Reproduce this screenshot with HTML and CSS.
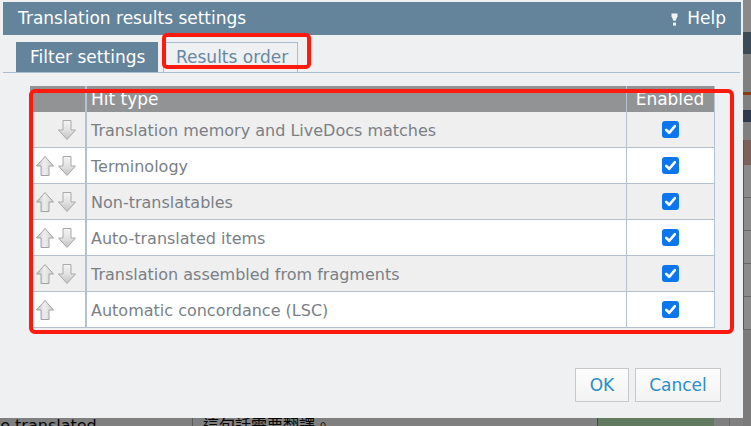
FILE: index.html
```html
<!DOCTYPE html>
<html lang="en">
<head>
<meta charset="utf-8">
<title>Translation results settings</title>
<link rel="stylesheet" href="styles.css">
</head>
<body>
<div class="defs">
  <svg width="0" height="0" aria-hidden="true">
    <defs>
      <linearGradient id="gDown" x1="0" y1="0" x2="0" y2="1">
        <stop offset="0" stop-color="#f4f4f4"/>
        <stop offset="0.5" stop-color="#e2e2e2"/>
        <stop offset="1" stop-color="#c2c2c2"/>
      </linearGradient>
      <linearGradient id="gUp" x1="0" y1="0" x2="1" y2="0">
        <stop offset="0" stop-color="#bdbdbd"/>
        <stop offset="0.45" stop-color="#ededed"/>
        <stop offset="1" stop-color="#d0d0d0"/>
      </linearGradient>
      <symbol id="arrowDown" viewBox="0 0 18 20">
        <path d="M5 0.5 H13 V10 H17.5 L9 19.5 L0.5 10 H5 Z" fill="url(#gDown)" stroke="#a9a9a9" stroke-width="1" stroke-linejoin="round"/>
      </symbol>
      <symbol id="arrowUp" viewBox="0 0 18 20">
        <path d="M5 19.5 H13 V10 H17.5 L9 0.5 L0.5 10 H5 Z" fill="url(#gUp)" stroke="#a3a3a3" stroke-width="1" stroke-linejoin="round"/>
      </symbol>
      <symbol id="check" viewBox="0 0 17 17">
        <rect x="0" y="0" width="17" height="17" rx="3" fill="#0b76f0"/>
        <path d="M4.2 8.9 L7.2 11.8 L12.9 5.2" fill="none" stroke="#fff" stroke-width="2.6" stroke-linecap="round" stroke-linejoin="round"/>
      </symbol>
    </defs>
  </svg>
</div>

<div class="screen">
  <div class="app">
    <div class="app-main">
      <div class="app-spacer"></div>
      <div class="app-row">
        <div class="cell cell-src"><span class="src-text">be translated.</span></div>
        <div class="cell cell-tgt">這句話需要翻譯。</div>
        <div class="cell cell-status"></div>
        <div class="cell cell-gap"></div>
        <div class="cell cell-rest"></div>
      </div>
    </div>
    <div class="app-side">
      <div class="side-a"></div>
      <div class="side-b"></div>
      <div class="side-c"></div>
      <div class="side-d"></div>
      <div class="side-e"></div>
      <div class="side-f"></div>
      <div class="side-g"></div>
      <div class="side-panel">
        <div class="panel-head"></div>
        <div class="panel-line"></div>
        <div class="panel-line"></div>
        <div class="panel-line"></div>
        <div class="panel-line"></div>
        <div class="panel-line"></div>
      </div>
      <div class="side-h"></div>
    </div>
  </div>

  <div class="dialog">
    <div class="titlebar">
      <span class="title">Translation results settings</span>
      <span class="help">
        <svg class="help-icon" width="7" height="13" viewBox="0 0 7 13" aria-hidden="true">
          <path d="M0.5 0.5 H6.5 V3.2 L4.6 7.8 H2.4 L0.5 3.2 Z" fill="#f2f2f2"/>
          <rect x="2" y="9.6" width="3" height="3" fill="#f2f2f2"/>
        </svg>
        <span>Help</span>
      </span>
    </div>

    <div class="tabs">
      <div class="tab tab-active">Filter settings</div>
      <div class="tab tab-idle">Results order</div>
    </div>

    <div class="table">
      <div class="row row-head">
        <div class="c c-arrows"></div>
        <div class="c c-type">Hit type</div>
        <div class="c c-enabled">Enabled</div>
      </div>

      <div class="row row-odd">
        <div class="c c-arrows"><span class="slot"></span><svg class="arrow"><use href="#arrowDown"/></svg></div>
        <div class="c c-type">Translation memory and LiveDocs matches</div>
        <div class="c c-enabled"><svg class="check"><use href="#check"/></svg></div>
      </div>
      <div class="row row-even">
        <div class="c c-arrows"><svg class="arrow"><use href="#arrowUp"/></svg><svg class="arrow"><use href="#arrowDown"/></svg></div>
        <div class="c c-type">Terminology</div>
        <div class="c c-enabled"><svg class="check"><use href="#check"/></svg></div>
      </div>
      <div class="row row-odd">
        <div class="c c-arrows"><svg class="arrow"><use href="#arrowUp"/></svg><svg class="arrow"><use href="#arrowDown"/></svg></div>
        <div class="c c-type">Non-translatables</div>
        <div class="c c-enabled"><svg class="check"><use href="#check"/></svg></div>
      </div>
      <div class="row row-even">
        <div class="c c-arrows"><svg class="arrow"><use href="#arrowUp"/></svg><svg class="arrow"><use href="#arrowDown"/></svg></div>
        <div class="c c-type">Auto-translated items</div>
        <div class="c c-enabled"><svg class="check"><use href="#check"/></svg></div>
      </div>
      <div class="row row-odd">
        <div class="c c-arrows"><svg class="arrow"><use href="#arrowUp"/></svg><svg class="arrow"><use href="#arrowDown"/></svg></div>
        <div class="c c-type">Translation assembled from fragments</div>
        <div class="c c-enabled"><svg class="check"><use href="#check"/></svg></div>
      </div>
      <div class="row row-even">
        <div class="c c-arrows"><svg class="arrow"><use href="#arrowUp"/></svg><span class="slot"></span></div>
        <div class="c c-type">Automatic concordance (LSC)</div>
        <div class="c c-enabled"><svg class="check"><use href="#check"/></svg></div>
      </div>
    </div>

    <div class="footer">
      <button class="btn btn-ok" type="button">OK</button>
      <button class="btn btn-cancel" type="button">Cancel</button>
    </div>
  </div>

  <div class="mark mark-tab"></div>
  <div class="mark mark-table"></div>
</div>
</body>
</html>
```

FILE: styles.css
```css
html, body {
  margin: 0;
  padding: 0;
}

body {
  font-family: "DejaVu Sans", Verdana, sans-serif;
  background: #808080;
}

.defs {
  height: 0;
  overflow: hidden;
}

.screen {
  width: 751px;
  height: 426px;
  position: relative;
  overflow: hidden;
  background: #808080;
}

/* ---------- background application (dimmed) ---------- */
.app {
  display: grid;
  grid-template-columns: 743px 8px;
  height: 426px;
}

.app-main {
  display: flex;
  flex-direction: column;
}

.app-spacer {
  flex: none;
  height: 416px;
}

.app-row {
  display: grid;
  grid-template-columns: 193px 405px 116px 16px 1fr;
  height: 10px;
}

.cell {
  box-sizing: border-box;
  overflow: hidden;
  white-space: nowrap;
  font-size: 16px;
  line-height: 20px;
  color: #050505;
}

.cell-src {
  border-right: 1px solid #5c5c5c;
}

.src-text {
  display: block;
  text-indent: -10px;
}

.cell-tgt {
  padding-left: 10px;
  border-right: 1px solid #4a4a4a;
  font-family: "DejaVu Sans", "Noto Sans CJK TC", sans-serif;
}

.cell-status {
  background: #627b60;
}

.cell-gap {
  border-right: 1px solid #6a6a6a;
}

.app-side {
  display: flex;
  flex-direction: column;
  background: #7c7c7c;
}

.side-a { height: 32px; background: #8a8a8a; }
.side-b { height: 22px; background: #3d4b56; }
.side-c { height: 38px; background: #808080; }
.side-d { height: 3px; background: #8c3c12; }
.side-e { height: 15px; background: #808080; }
.side-f { height: 12px; background: #2f3b4c; }
.side-g { height: 18px; background: #808080; }

.side-panel {
  height: 190px;
  background: #8b8b8b;
  border-left: 1px solid #555;
  display: flex;
  flex-direction: column;
}

.panel-head {
  height: 25px;
  background: #7a615a;
}

.panel-line {
  height: 32px;
  border-bottom: 1px solid #686868;
}

.side-h {
  flex: 1;
  background: #7b7b7b;
}

/* ---------- dialog ---------- */
.dialog {
  position: absolute;
  left: 0;
  top: 0;
  width: 743px;
  height: 418px;
  box-sizing: border-box;
  background: #eff0f2;
  padding: 2px 2px 0 3px;
  display: flex;
  flex-direction: column;
}

.titlebar {
  flex: none;
  height: 33px;
  background: #64849c;
  color: #ffffff;
  font-size: 17px;
  display: flex;
  align-items: center;
  justify-content: space-between;
  padding: 0 15px;
}

.title {
  line-height: 33px;
}

.help {
  display: flex;
  align-items: center;
  gap: 9px;
  line-height: 33px;
}

.help-icon {
  display: block;
  margin-top: 1px;
}

.tabs {
  flex: none;
  margin-top: 7px;
  margin-right: 1px;
  padding-left: 13px;
  display: flex;
  gap: 5px;
  border-bottom: 1px solid #a9bfd1;
}

.tab {
  height: 30px;
  box-sizing: border-box;
  font-size: 17px;
  line-height: 30px;
  white-space: nowrap;
}

.tab-active {
  width: 142px;
  padding-left: 14px;
  background: #64849c;
  color: #ffffff;
}

.tab-idle {
  width: 135px;
  padding-left: 12px;
  border: 1px solid #a9bfd1;
  border-bottom: 0;
  line-height: 29px;
  color: #6787a1;
}

/* ---------- table ---------- */
.table {
  flex: none;
  margin: 13px 0 0 27px;
  width: 685px;
}

.row {
  display: grid;
  grid-template-columns: 57px 540px 88px;
  height: 36px;
  box-sizing: border-box;
  border-bottom: 1px solid #b4c2d0;
}

.row-head {
  height: 26px;
  border-bottom: 0;
  background: #929395;
  color: #ffffff;
  font-size: 17px;
  line-height: 26px;
}

.row-odd { background: #efefef; }
.row-even { background: #ffffff; }

.c {
  box-sizing: border-box;
  border-right: 1px solid #b4c2d0;
  white-space: nowrap;
  overflow: hidden;
}

.c-arrows {
  border-right-width: 2px;
  display: flex;
  align-items: center;
  gap: 4px;
  padding-left: 6px;
}

.c-type {
  padding-left: 4px;
}

.row-odd .c-type,
.row-even .c-type {
  font-size: 16px;
  color: #7a7f86;
  line-height: 35px;
  padding-top: 1px;
}

.c-enabled {
  display: flex;
  align-items: center;
  justify-content: center;
}

.row-head .c-enabled {
  padding-right: 1px;
}

.slot {
  width: 18px;
  height: 20px;
  flex: none;
}

.arrow {
  display: block;
  width: 18px;
  height: 20px;
  flex: none;
}

.check {
  display: block;
  width: 17px;
  height: 17px;
}

/* ---------- footer ---------- */
.footer {
  flex: none;
  margin-top: 40px;
  padding-right: 20px;
  display: flex;
  justify-content: flex-end;
  gap: 6px;
}

.btn {
  height: 34px;
  box-sizing: border-box;
  border: 1px solid #c8c8c8;
  background: linear-gradient(#fdfdfd, #f3f3f3);
  color: #2a8ec6;
  font-family: "DejaVu Sans", Verdana, sans-serif;
  font-size: 17px;
  padding: 0;
  margin: 0;
}

.btn-ok { width: 54px; }
.btn-cancel { width: 86px; }

/* ---------- red annotation marks ---------- */
.mark {
  position: absolute;
  box-sizing: border-box;
  border: 4px solid #ff1a10;
  border-radius: 5px;
}

.mark-tab {
  left: 162px;
  top: 33px;
  width: 149px;
  height: 36px;
}

.mark-table {
  left: 29px;
  top: 89px;
  width: 705px;
  height: 245px;
  border-radius: 6px;
}
```
